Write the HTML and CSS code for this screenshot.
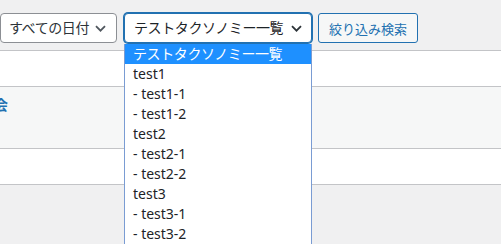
FILE: index.html
```html
<!DOCTYPE html>
<html lang="ja">
<head>
  <meta charset="UTF-8" />
  <meta name="viewport" content="width=device-width, initial-scale=1.0"/>
  <title>投稿一覧</title>
  <link rel="stylesheet" href="styles.css">
</head>
<body>
  <div class="views">
    <a href="#">すべて</a> <span class="count">(2)</span>
  </div>

  <div class="tablenav">
    <div class="select select-date">
      <span>すべての日付</span>
      <svg class="chevron" width="11" height="7" viewBox="0 0 11 7"><path d="M1 1.2l4.5 4.5 4.5-4.5" fill="none" stroke="#50575e" stroke-width="1.8"/></svg>
    </div>
    <div class="select select-tax">
      <span>テストタクソノミー一覧</span>
      <svg class="chevron" width="11" height="7" viewBox="0 0 11 7"><path d="M1 1.2l4.5 4.5 4.5-4.5" fill="none" stroke="#2c3338" stroke-width="1.8"/></svg>
      <ul class="options">
        <li class="active">テストタクソノミー一覧</li>
        <li>test1</li>
        <li>- test1-1</li>
        <li>- test1-2</li>
        <li>test2</li>
        <li>- test2-1</li>
        <li>- test2-2</li>
        <li>test3</li>
        <li>- test3-1</li>
        <li>- test3-2</li>
      </ul>
    </div>
    <button class="filter-btn">絞り込み検索</button>
  </div>

  <div class="list-table">
    <div class="row"></div>
    <div class="row row-alt">
      <a class="row-title" href="#">会</a>
    </div>
    <div class="row"></div>
  </div>
</body>
</html>
```
FILE: styles.css
```css
* { box-sizing: border-box; }

body {
  margin: 0;
  min-height: 244px;
  background: #f0f0f1;
  font-family: 'Noto Sans', 'Noto Sans CJK JP', sans-serif;
  font-size: 14px;
  color: #2c3338;
}

.views {
  margin-top: -17px;
  height: 20px;
  padding-left: 2px;
  font-size: 13px;
  line-height: 20px;
  color: #50575e;
}

.views a {
  color: #2271b1;
  text-decoration: none;
}

.tablenav {
  display: flex;
  height: 30px;
  margin-top: 10px;
}

.select {
  display: flex;
  align-items: center;
  justify-content: space-between;
  height: 30px;
  background: #fff;
  border: 1px solid #8c8f94;
  border-radius: 4px;
  line-height: 20px;
  letter-spacing: -0.4px;
}

.select-date {
  width: 117px;
  padding: 0 10px 0 8px;
}

.select-tax {
  position: relative;
  width: 188px;
  margin-left: 7px;
  padding: 0 9px 0 9px;
  border-color: #2271b1;
  box-shadow: 0 0 0 1px #2271b1;
  color: #1d2327;
}

.chevron { flex: none; }

.options {
  position: absolute;
  top: 30px;
  left: -1px;
  width: 188px;
  margin: 0;
  padding: 0;
  list-style: none;
  background: #fff;
  border: 1px solid #7a9cd3;
  border-top: none;
  z-index: 10;
  letter-spacing: 0;
}

.options li {
  height: 20px;
  padding-left: 8px;
  line-height: 20px;
  color: #1d2327;
  white-space: nowrap;
}

.options li.active {
  background: #1e90ff;
  color: #fff;
  letter-spacing: -0.4px;
}

.filter-btn {
  height: 30px;
  width: 100px;
  margin-left: 6px;
  padding: 0 10px;
  background: #f6f7f7;
  border: 1px solid #2271b1;
  border-radius: 3px;
  color: #2271b1;
  font-family: inherit;
  font-size: 13px;
}

.list-table {
  margin-top: 7px;
  border-top: 1px solid #c3c4c7;
}

.row {
  height: 36px;
  background: #fff;
  border-bottom: 1px solid #c3c4c7;
}

.row-alt {
  height: 62px;
  background: #f6f7f7;
  padding-top: 8px;
  line-height: 20px;
}

.row-title {
  display: block;
  text-indent: -6px;
  color: #2271b1;
  font-weight: 700;
  text-decoration: none;
}
```
